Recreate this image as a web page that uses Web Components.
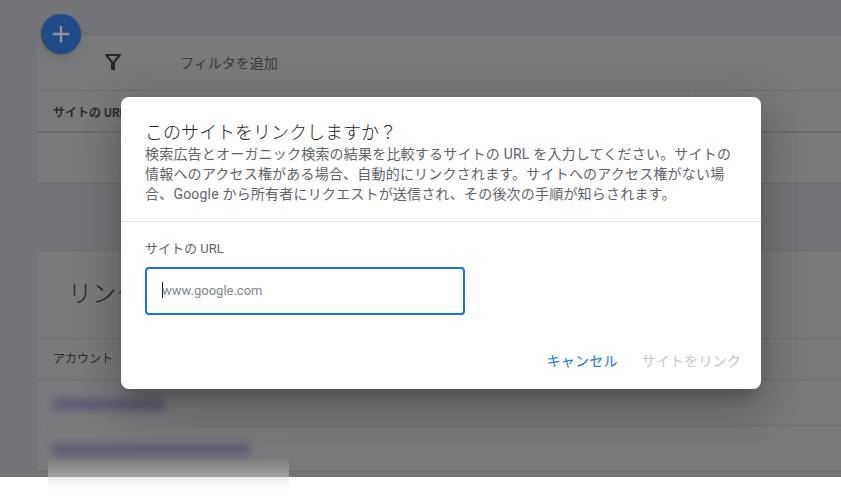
<!DOCTYPE html>
<html lang="ja"><head><meta charset="utf-8">
<style>
html,body{margin:0;height:100%;background:#fff;overflow:hidden}
body{font-family:Roboto,"Noto Sans CJK JP",sans-serif}
</style></head><body>
<template id="t-page"><style>
:host{display:block;position:relative;height:477px;background:#f1f3f4;overflow:hidden;color:#3c4043;padding:34px 0 0 37px;box-sizing:border-box}
.gap{height:66px}
.scrim{position:absolute;inset:0;background:rgba(32,33,36,.6)}
</style>
<slot name="top"></slot><div class="gap"></div><slot name="bottom"></slot><div class="scrim"></div></template>

<template id="t-card"><style>
:host{display:block;background:#fff;border-top:1px solid #e0e0e0;box-sizing:border-box}
</style><slot></slot></template>

<template id="t-row"><style>
:host{display:flex;align-items:center;box-sizing:border-box;height:var(--h,46px);border-bottom:var(--b,1px) solid #dadce0;padding-left:16px;font-size:12px;color:#3c4043}
.cell{flex:1}
.end{width:151px;height:100%;border-left:1px solid #dadce0;display:var(--end,none)}
</style><div class="cell"><slot></slot></div><div class="end"></div></template>

<template id="t-fab"><style>
:host{position:absolute;left:41px;top:14px;width:40px;height:40px;border-radius:50%;background:#204b87;box-shadow:0 1px 3px rgba(0,0,0,.12),0 4px 8px 3px rgba(0,0,0,.06);display:flex;align-items:center;justify-content:center}
svg{display:block}
</style><svg width="28" height="28" viewBox="0 0 24 24"><path d="M19 13h-6v6h-2v-6H5v-2h6V5h2v6h6z" fill="#8f949c" /></svg></template>

<template id="t-filter"><style>
:host{display:flex;align-items:center;height:56px;padding-bottom:2px;border-bottom:1px solid #dadce0;box-sizing:border-box;font-size:14px;color:#5f6368}
svg{margin-left:64px;display:block}
span{margin-left:55px}
</style><svg width="24" height="24" viewBox="0 0 24 24"><path fill="#303134" fill-rule="evenodd" d="M4.25 5.61C6.27 8.2 10 13 10 13v6c0 .55.45 1 1 1h2c.55 0 1-.45 1-1v-6s3.72-4.8 5.74-7.39c.51-.66.04-1.61-.79-1.61H5.04c-.83 0-1.3.95-.79 1.61zM7.5 6h9L12 11.8z"/></svg><span><slot></slot></span></template>

<template id="t-dialog"><style>
:host{position:absolute;left:121px;top:97px;width:640px;height:292px;background:#fff;border-radius:8px;box-shadow:0 11px 15px -7px rgba(0,0,0,.2),0 24px 38px 3px rgba(0,0,0,.14),0 9px 46px 8px rgba(0,0,0,.12);display:flex;flex-direction:column;box-sizing:border-box}
header{padding:24px 24px 0;border-bottom:1px solid #e0e0e0;height:125px;box-sizing:border-box}
h2{margin:0;font-size:18px;font-weight:300;line-height:23px;color:#202124}
p{margin:0;font-size:14px;line-height:20px;letter-spacing:.2px;color:#5f6368}
main{flex:1;padding:19px 24px 0}
label{display:block;font-size:13px;line-height:16px;color:#5f6368;margin-bottom:10px}
footer{display:flex;justify-content:flex-end;gap:24px;padding:0 20px 18px;font-size:14px;line-height:20px;letter-spacing:.2px}
</style>
<header><h2><slot name="title"></slot></h2><p><slot name="desc"></slot></p></header>
<main><label><slot name="label"></slot></label><slot name="field"></slot></main>
<footer><slot name="actions"></slot></footer></template>

<template id="t-field"><style>
:host{display:flex;align-items:center;width:320px;height:48px;box-sizing:border-box;border:2px solid #1a73e8;border-radius:4px;padding:0 0 2px 15px;font-size:13px;color:#80868b}
i{display:block;width:1px;height:16px;background:#202124;margin-right:-1px}
</style><i></i><slot></slot></template>

<template id="t-btn"><style>
:host{display:block;color:var(--c,#1a73e8)}
</style><slot></slot></template>

<template id="t-redact"><style>
:host{position:absolute;display:block;left:var(--x);top:var(--y);width:var(--w);height:var(--h);background:var(--bg,#7a7b7c)}
b{position:absolute;left:var(--bx);top:var(--by);width:var(--bw);height:var(--bh);background:#595a72;filter:blur(4px)}
</style><b></b></template>

<template id="t-fade"><style>
:host{position:absolute;display:block;left:48px;width:241px;top:458px;height:19px;background:linear-gradient(rgba(255,255,255,0),rgba(255,255,255,.3))}
div{position:absolute;left:0;right:0;top:19px;height:14px;background:linear-gradient(rgba(235,235,235,1),rgba(255,255,255,1))}
</style><div></div></template>

<script>
for (const n of ['page','card','row','fab','filter','dialog','field','btn','redact','fade']) {
  customElements.define('x-'+n, class extends HTMLElement {
    constructor(){super();this.attachShadow({mode:'open'}).append(document.getElementById('t-'+n).content.cloneNode(true));}
  });
}
</script>

<x-page>
  <x-card slot="top">
    <x-filter>フィルタを追加</x-filter>
    <x-row style="--h:42px;--b:2px;--end:block;font-weight:700">サイトの URL</x-row>
    <x-row style="--h:51px"></x-row>
  </x-card>
  <x-card slot="bottom">
    <x-row style="--h:88px;padding:0 0 6px 31px;font-size:24px;font-weight:300;color:#202124">リンク</x-row>
    <x-row style="--h:41px;padding-bottom:3px">アカウント</x-row>
    <x-row></x-row>
    <x-row></x-row>
  </x-card>
</x-page>
<x-fab></x-fab>
<x-redact style="--x:42px;--y:395px;--w:153px;--h:37px;--bx:11px;--by:4px;--bw:111px;--bh:11px"></x-redact>
<x-redact style="--x:48px;--y:432px;--w:241px;--h:45px;--bx:5px;--by:12px;--bw:197px;--bh:11px"></x-redact>
<x-fade></x-fade>
<x-dialog>
  <span slot="title">このサイトをリンクしますか？</span>
  <span slot="desc">検索広告とオーガニック検索の結果を比較するサイトの URL を入力してください。サイトの情報へのアクセス権がある場合、自動的にリンクされます。サイトへのアクセス権がない場合、Google から所有者にリクエストが送信され、その後次の手順が知らされます。</span>
  <span slot="label">サイトの URL</span>
  <x-field slot="field">www.google.com</x-field>
  <x-btn slot="actions">キャンセル</x-btn>
  <x-btn slot="actions" style="--c:#c4c7c9">サイトをリンク</x-btn>
</x-dialog>
</body></html>
